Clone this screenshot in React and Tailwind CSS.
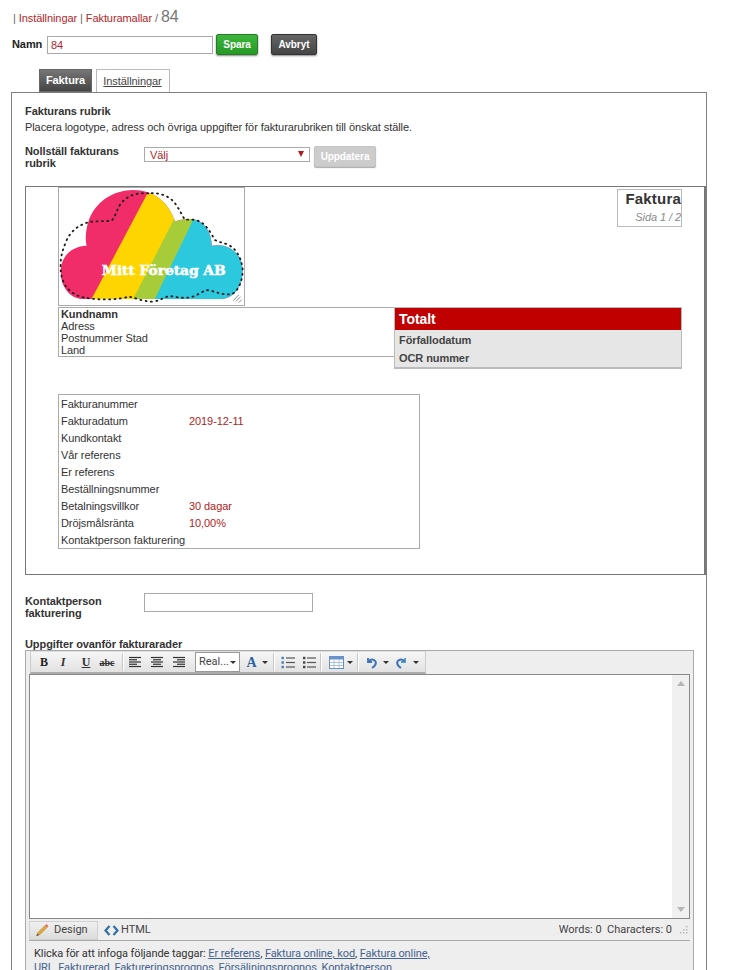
import React from "react";

const infoRows = [
  ["Fakturanummer", ""],
  ["Fakturadatum", "2019-12-11"],
  ["Kundkontakt", ""],
  ["Vår referens", ""],
  ["Er referens", ""],
  ["Beställningsnummer", ""],
  ["Betalningsvillkor", "30 dagar"],
  ["Dröjsmålsränta", "10,00%"],
  ["Kontaktperson fakturering", ""],
];

function Caret({ className = "" }) {
  return <span className={`inline-block w-0 h-0 border-l-[3px] border-r-[3px] border-t-[3px] border-l-transparent border-r-transparent border-t-[#333] ${className}`} />;
}

function Separator() {
  return <span className="w-px h-[18px] bg-[#c8c8c8] border-r border-white box-content" />;
}

function Logo() {
  const cloud = "M190 357 C150 357 122 320 122 275 C122 230 155 198 200 197 C195 180 197 150 205 125 C225 65 280 30 340 30 C400 30 445 65 465 125 C480 118 500 115 520 118 C555 125 575 160 575 197 C590 195 600 195 610 197 C645 205 668 235 668 272 C668 320 640 357 600 357 Z";
  return (
    <svg viewBox="117 24 555 351" className="w-full h-full block">
      <defs>
        <clipPath id="cloud">
          <path d={cloud} />
        </clipPath>
      </defs>
      <g clipPath="url(#cloud)">
        <rect x="100" y="20" width="600" height="350" fill="#f02d69" />
        <polygon points="393,20 213,360 345,360 478,90 480,20" fill="#ffd500" />
        <polygon points="476,90 338,360 405,360 535,100 535,90" fill="#a6cd39" />
        <polygon points="529,100 403,360 700,360 700,100" fill="#2cc8de" />
      </g>
      <path
        d="M385 40 C350 38 325 45 305 68 C290 85 290 105 275 122 C250 125 225 122 205 127 C175 135 150 155 138 185 C128 210 122 230 122 250 C120 290 130 320 160 340 C180 352 200 355 225 357 C260 360 300 358 325 350 C345 352 365 365 400 365 C420 362 435 350 450 348 C470 352 490 355 510 352 C530 348 545 335 560 330 C590 335 620 350 640 340 C660 325 668 295 668 270 C665 235 650 205 620 192 C605 188 595 185 585 180 C570 155 555 125 525 120 C515 118 505 118 495 120 C480 95 470 70 450 55 C430 42 410 38 385 40 Z"
        fill="none"
        stroke="#1c1c1c"
        strokeWidth="5.5"
        strokeLinecap="round"
        strokeDasharray="3 13"
      />
      <text x="245" y="285" fill="#fff" stroke="#fff" strokeWidth="1.5" fontFamily="'DejaVu Serif', serif" fontWeight="700" fontSize="38" textLength="372" lengthAdjust="spacingAndGlyphs">
        Mitt Företag AB
      </text>
      <g stroke="#777" strokeWidth="2.5">
        <line x1="640" y1="362" x2="656" y2="345" />
        <line x1="648" y1="364" x2="662" y2="350" />
        <line x1="656" y1="368" x2="665" y2="359" />
      </g>
    </svg>
  );
}

function AlignIcon({ type }) {
  const lines = type === "left"
    ? [[1, 13], [1, 9], [1, 13], [1, 9], [1, 13]]
    : type === "center"
      ? [[1, 13], [3, 11], [1, 13], [3, 11], [1, 13]]
      : [[1, 13], [5, 13], [1, 13], [5, 13], [1, 13]];
  return (
    <svg width="14" height="12" viewBox="0 0 14 12">
      {lines.map(([a, b], i) => (
        <line key={i} x1={a} x2={b} y1={1.5 + i * 2.25} y2={1.5 + i * 2.25} stroke="#333" strokeWidth="1.2" />
      ))}
    </svg>
  );
}

function ListIcon({ numbered }) {
  return (
    <svg width="14" height="13" viewBox="0 0 14 13">
      {[2, 6.5, 11].map(y => (
        <g key={y}>
          <line x1="5" x2="14" y1={y} y2={y} stroke="#555" strokeWidth="1.2" />
          <rect x={numbered ? 0.5 : 1} y={y - 1.2} width="2.4" height="2.4" fill={numbered ? "#4a7ab8" : "#444"} />
        </g>
      ))}
    </svg>
  );
}

function ToolBtn({ children, className = "" }) {
  return <span className={`flex items-center justify-center h-full ${className}`}>{children}</span>;
}

function Toolbar() {
  return (
    <div className="flex items-center h-[23px] w-[396px] ml-[4px] bg-gradient-to-b from-[#f6f6f6] to-[#e2e2e2] border-b-2 border-[#aaa] border-l border-l-[#ccc] border-r border-r-[#ccc] border-t border-t-[#ddd] pl-[3px] tracking-normal">
      <ToolBtn className="w-[20px] font-['Liberation_Serif',serif] font-bold text-[12px] text-[#222]">B</ToolBtn>
      <ToolBtn className="w-[18px] font-['Liberation_Serif',serif] italic font-bold text-[12px] text-[#333]">I</ToolBtn>
      <ToolBtn className="w-[28px] font-['Liberation_Serif',serif] font-bold text-[12px] text-[#333] underline">U</ToolBtn>
      <ToolBtn className="w-[14px] font-['Liberation_Serif',serif] font-bold text-[10px] text-[#333] line-through">abc</ToolBtn>
      <span className="w-[8px]" />
      <Separator />
      <ToolBtn className="w-[22px]"><AlignIcon type="left" /></ToolBtn>
      <ToolBtn className="w-[22px]"><AlignIcon type="center" /></ToolBtn>
      <ToolBtn className="w-[22px]"><AlignIcon type="right" /></ToolBtn>
      <span className="w-[5px]" />
      <span className="flex items-center justify-between w-[45px] h-[20px] bg-white border border-[#999] pl-[3px] pr-[3px] font-['Roboto',sans-serif] text-[11px] text-[#444]">
        Real...
        <Caret />
      </span>
      <span className="w-[5px]" />
      <ToolBtn className="w-[13px] font-['Liberation_Serif',serif] font-bold text-[14px] text-[#2f5f9f]">A</ToolBtn>
      <Caret className="ml-[4px]" />
      <span className="w-[5px]" />
      <Separator />
      <span className="w-[6px]" />
      <ToolBtn className="w-[14px]"><ListIcon numbered /></ToolBtn>
      <span className="w-[7px]" />
      <ToolBtn className="w-[14px]"><ListIcon /></ToolBtn>
      <span className="w-[4px]" />
      <Separator />
      <span className="w-[7px]" />
      <svg width="15" height="13" viewBox="0 0 15 13">
        <rect x="0.5" y="0.5" width="14" height="12" fill="#fff" stroke="#6a8fc0" />
        <rect x="0.5" y="0.5" width="14" height="3" fill="#6a93cc" />
        <path d="M5 3v9M10 3v9M1 6.5h13M1 9.5h13" stroke="#a9c0de" />
      </svg>
      <Caret className="ml-[3px]" />
      <span className="w-[4px]" />
      <Separator />
      <span className="w-[6px]" />
      <svg width="13" height="13" viewBox="0 0 13 13" fill="none">
        <path d="M3 2v4h4" stroke="#3f74ba" strokeWidth="1.8" />
        <path d="M3.2 5.5C5 3 9 2.5 10.5 5.5C11.5 8 9.5 10.5 7 12" stroke="#3f74ba" strokeWidth="2" />
      </svg>
      <Caret className="ml-[5px]" />
      <span className="w-[6px]" />
      <svg width="13" height="13" viewBox="0 0 13 13" fill="none">
        <path d="M10 2v4h-4" stroke="#4f9fc4" strokeWidth="1.8" />
        <path d="M9.8 5.5C8 3 4 2.5 2.5 5.5C1.5 8 3.5 10.5 6 12" stroke="#3f74ba" strokeWidth="2" />
      </svg>
      <Caret className="ml-[5px]" />
    </div>
  );
}

function TagLink({ children }) {
  return <a className="text-[#44638f] underline">{children}</a>;
}

export default function App() {
  return (
    <div className="w-[733px] h-[970px] overflow-hidden bg-white font-['Liberation_Sans',Arial,sans-serif] text-[11px] tracking-[-0.08px] text-[#333]">
      <div className="flex items-baseline h-[34px] pl-[13px] pt-[7px] text-[#666]">
        <span>|&nbsp;</span>
        <a className="text-[#b3262b]">Inställningar</a>
        <span>&nbsp;|&nbsp;</span>
        <a className="text-[#b3262b]">Fakturamallar</a>
        <span>&nbsp;/&nbsp;</span>
        <span className="text-[16px] leading-[20px] text-[#777]">84</span>
      </div>

      <div className="flex items-center h-[21px] pl-[12px]">
        <label className="w-[35px] font-bold text-[#222]">Namn</label>
        <input readOnly value="84" className="w-[166px] h-[18px] border border-[#aaa] px-[3px] text-[11px] text-[#b3262b] outline-none" />
        <button className="ml-[3px] w-[42px] h-[21px] rounded-[2px] bg-gradient-to-b from-[#3db53d] to-[#249a24] border border-[#2a7a2a] text-white text-[10px] font-bold shadow-[0_1px_2px_#888]">Spara</button>
        <button className="ml-[13px] w-[46px] h-[21px] rounded-[2px] bg-gradient-to-b from-[#666] to-[#444] border border-[#333] text-white text-[10px] font-bold shadow-[0_1px_2px_#888]">Avbryt</button>
      </div>

      <div className="flex items-end h-[23px] mt-[14px] pl-[39px] gap-[4px]">
        <span className="flex items-center justify-center w-[53px] h-[23px] bg-gradient-to-b from-[#777] to-[#444] text-white font-bold border border-[#666]">Faktura</span>
        <a className="flex items-center justify-center w-[74px] h-[23px] pr-[1px] bg-white border border-[#bbb] border-b-0 text-[#444] underline">Inställningar</a>
      </div>

      <div className="ml-[11px] w-[696px] h-[900px] border border-[#808080] pt-[12px]">
        <div className="pl-[13px]">
          <h2 className="font-bold text-[#333] leading-[13px]">Fakturans rubrik</h2>
          <p className="mt-[3px] leading-[13px] text-[#333]">Placera logotype, adress och övriga uppgifter för fakturarubriken till önskat ställe.</p>
          <div className="flex mt-[11px] h-[29px]">
            <label className="w-[119px] font-bold leading-[12px] text-[#333]">Nollställ fakturans rubrik</label>
            <div className="relative w-[166px] h-[15px] mt-[2px] border border-[#aaa] pl-[5px] leading-[15px] text-[#b3262b]">
              Välj
              <span className="absolute right-[5px] top-[3px] w-0 h-0 border-l-[3px] border-r-[3px] border-t-[6px] border-l-transparent border-r-transparent border-t-[#b01c1c]" />
            </div>
            <button className="ml-[4px] mt-[1px] w-[62px] h-[21px] rounded-[2px] bg-[#cccccc] border border-[#c4c4c4] text-white text-[10px] font-bold shadow-[0_1px_1px_#aaa]">Uppdatera</button>
          </div>
        </div>

        <div className="relative ml-[13px] mt-[12px] h-[389px] border border-[#777] border-r-2">
          <div className="absolute left-[32px] top-0 w-[187px] h-[119px] border border-[#aaa] bg-white">
            <Logo />
          </div>

          <div className="absolute left-[591px] top-[2px] w-[65px] h-[38px] border border-[#bbb] text-right">
            <div className="font-bold text-[15px] tracking-[0.2px] leading-[18px] text-[#333]">Faktura</div>
            <div className="italic text-[11px] leading-[12px] mt-[3px] text-[#888]">Sida 1 / 2</div>
          </div>

          <div className="absolute left-[32px] top-[120px] w-[624px] h-[50px] border border-[#aaa] pl-[2px] leading-[12px] text-[#333]">
            <div className="font-bold">Kundnamn</div>
            <div>Adress</div>
            <div>Postnummer Stad</div>
            <div>Land</div>
          </div>

          <div className="absolute left-[368px] top-[120px] w-[288px] h-[62px] border border-[#bbb] border-b-2 bg-[#e6e6e6]">
            <div className="h-[22px] bg-[#c00000] pl-[4px] text-white font-bold text-[14px] leading-[22px]">Totalt</div>
            <div className="pl-[4px] font-bold text-[#444] leading-[18px] mt-[1px]">Förfallodatum</div>
            <div className="pl-[4px] font-bold text-[#444] leading-[18px]">OCR nummer</div>
          </div>

          <div className="absolute left-[32px] top-[207px] w-[362px] h-[155px] border border-[#aaa] pl-[2px] pt-[1px]">
            {infoRows.map(([label, value]) => (
              <div key={label} className="flex h-[17px] leading-[17px]">
                <span className="w-[128px] whitespace-nowrap">{label}</span>
                <span className="text-[#b01c1c]">{value}</span>
              </div>
            ))}
          </div>
        </div>

        <div className="flex pl-[13px] mt-[18px] h-[41px]">
          <label className="w-[119px] font-bold leading-[12px] pt-[2px]">Kontaktperson fakturering</label>
          <input readOnly className="w-[169px] h-[19px] border border-[#aaa] outline-none" />
        </div>

        <div className="pl-[13px]">
          <div className="font-bold leading-[12px] mt-[4px] text-[#333]">Uppgifter ovanför fakturarader</div>
          <div className="w-[669px] h-[400px] border border-[#aaa] bg-[#eeeeee]">
            <Toolbar />
            <div className="flex w-[661px] h-[245px] ml-[3px] border border-[#888] bg-white">
              <div className="flex-1" />
              <div className="flex flex-col items-center justify-between w-[17px] bg-[#f0f0f0] py-[6px]">
                <span className="w-0 h-0 border-l-[4px] border-r-[4px] border-b-[5px] border-l-transparent border-r-transparent border-b-[#b5b5b5]" />
                <span className="w-0 h-0 border-l-[4px] border-r-[4px] border-t-[5px] border-l-transparent border-r-transparent border-t-[#b5b5b5]" />
              </div>
            </div>
            <div className="flex items-center w-[661px] h-[22px] ml-[3px] pt-[1px] border-b border-[#aaa] font-['Roboto',sans-serif] text-[11px] tracking-normal text-[#444]">
              <span className="flex items-center gap-[4px] w-[69px] h-[19px] pl-[5px] bg-gradient-to-b from-[#f0f0f0] to-[#dcdcdc] border border-[#d0d0d0]">
                <svg width="15" height="14" viewBox="0 0 15 14" fill="none">
                  <path d="M1.5 13L3 9.5L10 2.5L12 4.5L5 11.5Z" fill="#e0a83a" stroke="#b9882c" strokeWidth="0.6" />
                  <path d="M1.5 13L2.5 10.5L4 12Z" fill="#555" />
                  <path d="M10 2.5L11.5 1L13.5 3L12 4.5Z" fill="#e26a6a" />
                </svg>
                Design
              </span>
              <span className="flex items-center gap-[2px] ml-[6px]">
                <svg width="15" height="11" viewBox="0 0 15 11" fill="none">
                  <path d="M5.5 1L1.5 5.5L5.5 10" stroke="#2f6fa8" strokeWidth="2.2" />
                  <path d="M9.5 1L13.5 5.5L9.5 10" stroke="#2f6fa8" strokeWidth="2.2" />
                </svg>
                HTML
              </span>
              <span className="ml-auto mr-[5px]">Words: 0&nbsp;&nbsp;Characters: 0</span>
              <svg width="12" height="12" viewBox="0 0 12 12" className="mr-[1px]">
                {[[9, 2], [9, 5], [6, 5], [9, 8], [6, 8], [3, 8]].map(([x, y]) => (
                  <rect key={`${x}-${y}`} x={x} y={y} width="1.5" height="1.5" fill="#bbb" />
                ))}
              </svg>
            </div>
            <div className="pl-[8px] pt-[6px] font-['Roboto',sans-serif] text-[11px] tracking-[-0.09px] leading-[14px] text-[#333] whitespace-nowrap">
              <div>
                Klicka för att infoga följande taggar: <TagLink>Er referens</TagLink>, <TagLink>Faktura online, kod</TagLink>, <TagLink>Faktura online,</TagLink>
              </div>
              <div>
                <TagLink>URL</TagLink>, <TagLink>Fakturerad</TagLink>, <TagLink>Faktureringsprognos</TagLink>, <TagLink>Försäljningsprognos</TagLink>, <TagLink>Kontaktperson</TagLink>
              </div>
            </div>
          </div>
        </div>
      </div>
    </div>
  );
}
